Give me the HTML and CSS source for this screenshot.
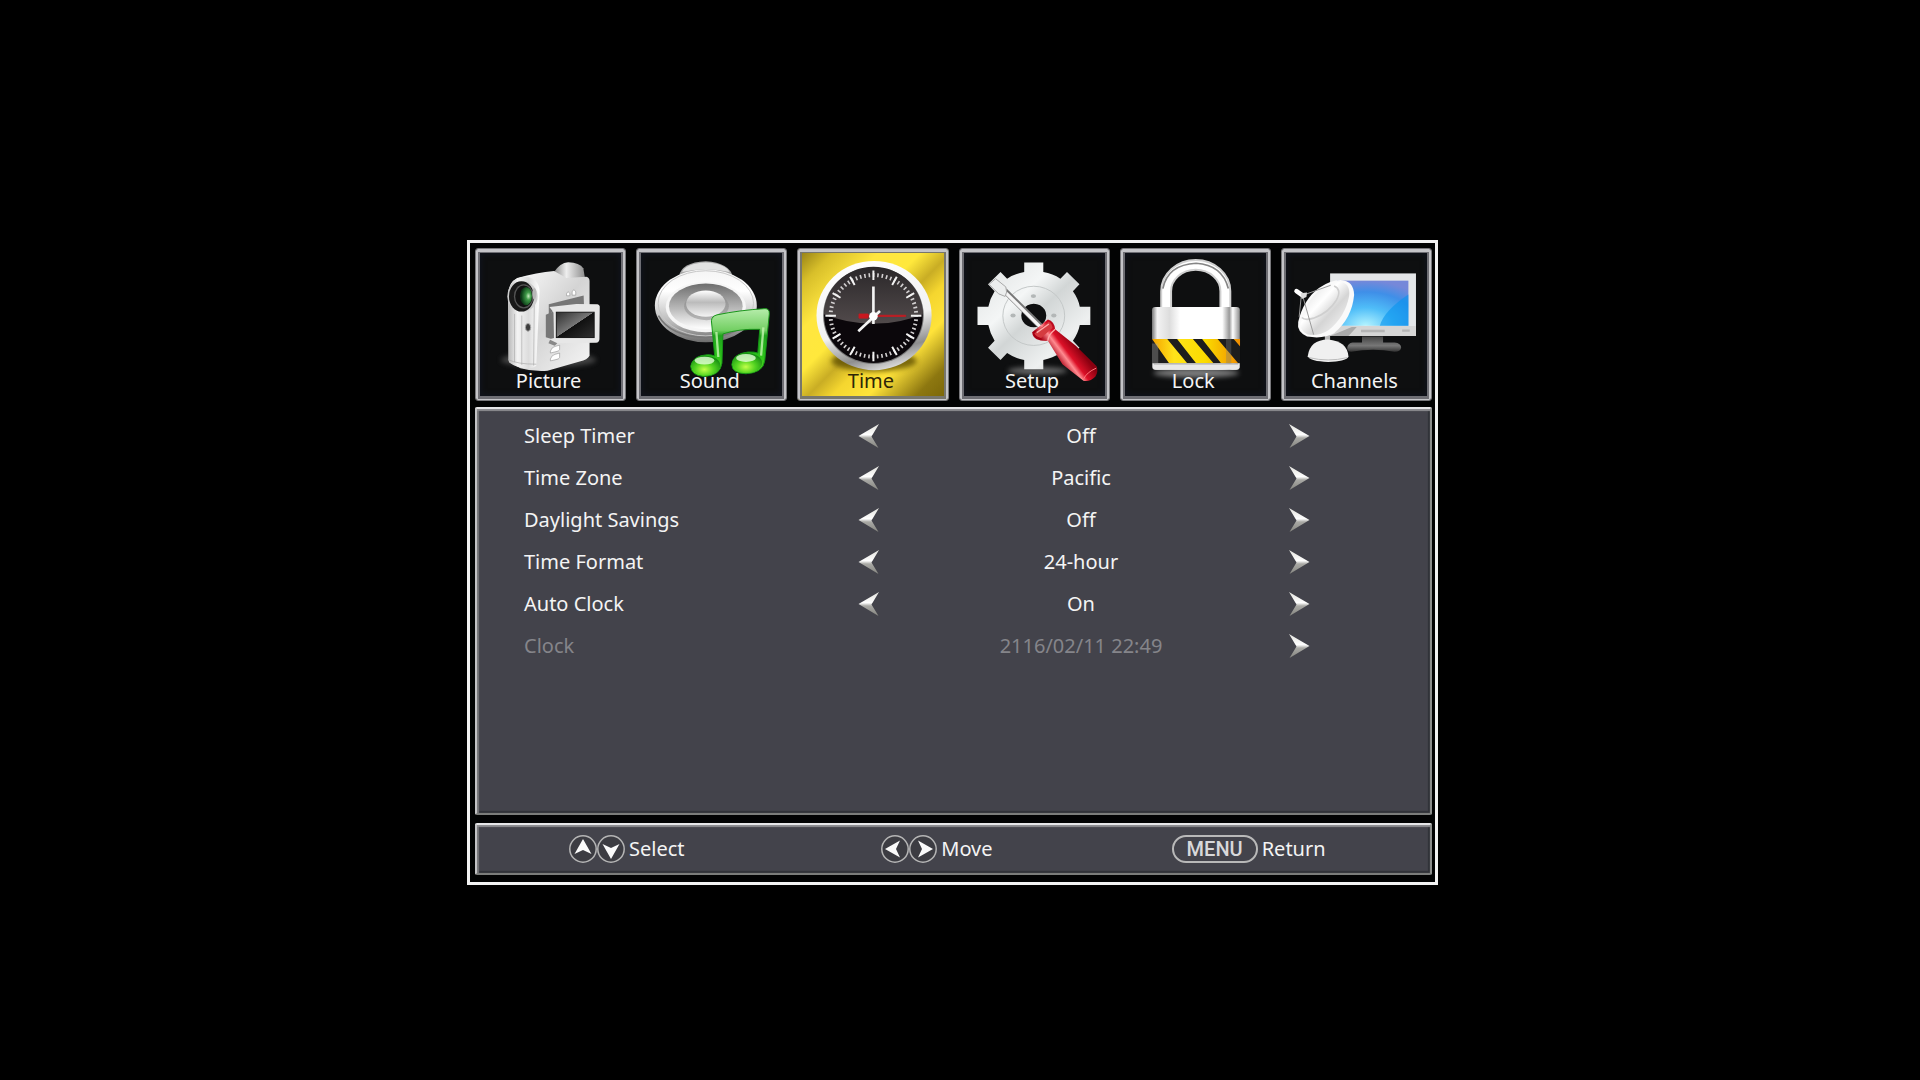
FILE: index.html
```
<!DOCTYPE html>
<html lang="en">
<head>
<meta charset="utf-8">
<meta name="viewport" content="width=device-width, initial-scale=1">
<title>TV Settings - Time</title>
<link rel="stylesheet" href="styles.css">
</head>
<body>
<svg class="defs" aria-hidden="true">
  <defs>
    <linearGradient id="arrowFill" x1="0" y1="0" x2="0" y2="1">
      <stop offset="0.1" stop-color="#e8e8e4"/><stop offset="0.45" stop-color="#fff"/><stop offset="0.58" stop-color="#a9a9a5"/><stop offset="1" stop-color="#85857f"/>
    </linearGradient>
    <symbol id="arrow-right" viewBox="0 0 22 24"><path d="M1 0 L21.500 12 L1.500 24 L8.500 12.500 Z" fill="url(#arrowFill)"/></symbol>
    <symbol id="arrow-left" viewBox="0 0 22 24"><path d="M21 0 L0.500 12 L20.500 24 L13.500 12.500 Z" fill="url(#arrowFill)"/></symbol>
    <symbol id="key" viewBox="0 0 28 28"><circle cx="14" cy="14" r="13.200" fill="#3c3c42" stroke="#b5b5b5" stroke-width="1.500"/><path d="M14 4 L22.500 19 L14 15 L5.500 19 Z" fill="#fafafa"/></symbol>
    <filter id="soft" x="-30%" y="-80%" width="160%" height="260%"><feGaussianBlur stdDeviation="8"/></filter>
  </defs>
</svg>
<main class="osd">
  <nav class="tabs" aria-label="Menu">
    <button class="tab" type="button">
      <svg class="tab-icon" viewBox="60 53 423 429" aria-hidden="true">
        <defs>
          <linearGradient id="camSide" x1="0" y1="0" x2="1" y2="1"><stop offset="0" stop-color="#fff"/><stop offset=".5" stop-color="#d4d4d4"/><stop offset="1" stop-color="#f6f6f6"/></linearGradient>
          <linearGradient id="camFront" x1="0" y1="0" x2="1" y2="0"><stop offset="0" stop-color="#b8b8b8"/><stop offset=".3" stop-color="#f4f4f4"/><stop offset=".65" stop-color="#dcdcdc"/><stop offset="1" stop-color="#fff"/></linearGradient>
          <linearGradient id="camTop" x1="0" y1="0" x2="1" y2="0"><stop offset="0" stop-color="#8a8a8a"/><stop offset=".4" stop-color="#eee"/><stop offset="1" stop-color="#8d8d8d"/></linearGradient>
          <linearGradient id="camLcd" x1="0" y1="0" x2="1" y2="1"><stop offset="0" stop-color="#2e2e2e"/><stop offset=".49" stop-color="#777"/><stop offset=".5" stop-color="#101010"/><stop offset="1" stop-color="#303030"/></linearGradient>
          <radialGradient id="camLens" cx=".7" cy=".5" r=".6"><stop offset="0" stop-color="#c8edc0"/><stop offset=".35" stop-color="#3f9a48"/><stop offset="1" stop-color="#0b3b16"/></radialGradient>
        </defs>
        <ellipse cx="265" cy="375" rx="145" ry="22" fill="#666" opacity=".6" filter="url(#soft)"/>
        <path d="M282 108 Q300 80 325 78 Q360 80 371 96 L376 126 L322 132 Z" fill="url(#camTop)"/>
        <path d="M170 126 Q230 110 282 105 L320 126 L380 122 Q390 124 390 135 L390 362 Q384 374 360 380 L262 408 Q225 412 180 400 L145 382 L142 180 Q142 140 170 126Z" fill="url(#camSide)"/>
        <path d="M143 165 Q155 122 195 122 Q235 125 238 165 L228 392 Q222 402 190 400 Q148 392 143 375Z" fill="url(#camFront)"/>
        <path d="M162 235 L162 382 M184 240 L184 390 M222 205 L220 392" stroke="#a9a9a9" stroke-width="2" fill="none"/>
        <path d="M143 374 Q170 388 228 388" stroke="#aaa" stroke-width="2" fill="none"/>
        <circle cx="186" cy="182" r="46" fill="#cfcfcf"/>
        <ellipse cx="183" cy="182" rx="38" ry="46" fill="#191919"/>
        <ellipse cx="190" cy="182" rx="30" ry="37" fill="#555"/>
        <ellipse cx="190" cy="182" rx="26" ry="33" fill="#111"/>
        <ellipse cx="197" cy="181" rx="18" ry="28" fill="url(#camLens)"/>
        <ellipse cx="222" cy="174" rx="6" ry="18" fill="#b8b8b8"/>
        <ellipse cx="203" cy="276" rx="8" ry="12" fill="#3c3c3c" stroke="#aaa" stroke-width="3"/>
        <path d="M266 206 L372 179 L373 208 L290 214 L266 240Z" fill="#777"/>
        <path d="M257 238 L280 228 L282 314 L257 306Z" fill="#777"/>
        <path d="M268 214 L350 205 L414 206 Q422 208 421 216 L420 312 Q419 322 410 323 L282 324 L268 312 L282 308 L282 232Z" fill="#e7e7e7"/>
        <rect x="289" y="230" width="115" height="77" fill="url(#camLcd)" stroke="#171717" stroke-width="3"/>
        <path d="M320 174q5-12 10 0v6h-10zM337 168q5-12 11 0v10h-11z" fill="#fff" stroke="#999" stroke-width="2"/>
        <path d="M271 348q4-12 14-14l14-4v14q-3 5-11 6l-17 4zM271 372q4-12 14-14l14-4v14q-3 5-11 6l-17 4z" fill="#fff" stroke="#999" stroke-width="2"/>
        <path d="M270 314 L265 324 L284 332 L292 324Z" fill="#888"/>
      </svg>
      <span class="tab-label">Picture</span>
    </button>
    <button class="tab" type="button">
      <svg class="tab-icon" viewBox="46 53 423 429" aria-hidden="true">
        <defs>
          <linearGradient id="spkRim" x1="0" y1="0" x2="0" y2="1"><stop offset="0" stop-color="#f4f4f4"/><stop offset=".3" stop-color="#fff"/><stop offset=".75" stop-color="#b5b5b5"/><stop offset="1" stop-color="#6d6d6d"/></linearGradient>
          <linearGradient id="spkCone" x1="0" y1="0" x2="0" y2="1"><stop offset="0" stop-color="#6e6e6e"/><stop offset=".55" stop-color="#b9b9b9"/><stop offset="1" stop-color="#fff"/></linearGradient>
          <linearGradient id="spkCap" x1="0" y1="0" x2="0" y2="1"><stop offset="0" stop-color="#fff"/><stop offset=".45" stop-color="#bbb"/><stop offset="1" stop-color="#f4f4f4"/></linearGradient>
          <linearGradient id="noteBar" x1="0" y1="0" x2="0" y2="1"><stop offset="0" stop-color="#b7edac"/><stop offset=".32" stop-color="#73cf63"/><stop offset=".4" stop-color="#1fa31c"/><stop offset=".7" stop-color="#2cc21a"/><stop offset="1" stop-color="#62dd22"/></linearGradient>
          <radialGradient id="noteHead" cx=".45" cy=".7" r=".65"><stop offset="0" stop-color="#c2ff4a"/><stop offset=".5" stop-color="#52d321"/><stop offset="1" stop-color="#178f13"/></radialGradient>
        </defs>
        <path d="M158 122 Q165 78 240 75 Q312 80 322 122Z" fill="#a9a9a9"/>
        <path d="M168 108 Q178 82 240 79 Q300 82 312 108 Q240 90 168 108Z" fill="#e2e2e2"/>
        <ellipse cx="240" cy="210" rx="155" ry="111" fill="url(#spkRim)"/>
        <ellipse cx="240" cy="203" rx="145" ry="99" fill="none" stroke="#c6c6c6" stroke-width="3"/>
        <path d="M96 240 Q130 302 240 307 Q340 304 382 240" fill="none" stroke="#777" stroke-width="5"/>
        <ellipse cx="240" cy="214" rx="122" ry="77" fill="#f6f6f6"/>
        <ellipse cx="240" cy="212" rx="112" ry="69" fill="url(#spkCone)"/>
        <ellipse cx="242" cy="212" rx="68" ry="42" fill="#8a8a8a" opacity=".5"/>
        <ellipse cx="240" cy="204" rx="60" ry="40" fill="url(#spkCap)"/>
        <path d="M257 256 Q258 242 274 238 Q340 224 420 219 Q434 219 433 235 L419 378 Q414 414 362 417 Q320 416 319 389 Q322 356 368 351 Q388 350 398 354 L404 282 Q340 280 292 296 L289 385 Q284 424 232 425 Q196 422 194 394 Q200 362 245 359 Q258 359 267 363Z" fill="url(#noteBar)" stroke="#159416" stroke-width="3"/>
        <ellipse cx="240" cy="392" rx="44" ry="30" fill="url(#noteHead)"/>
        <ellipse cx="366" cy="384" rx="45" ry="30" fill="url(#noteHead)"/>
        <ellipse cx="236" cy="377" rx="30" ry="12" fill="#e5ffd9" opacity=".8"/>
        <ellipse cx="362" cy="369" rx="30" ry="12" fill="#e5ffd9" opacity=".8"/>
        <path d="M272 290 L278 366 M415 276 L408 362" stroke="#c5f5b0" stroke-width="7" opacity=".8"/>
      </svg>
      <span class="tab-label">Sound</span>
    </button>
    <button class="tab tab-active" type="button" aria-current="page">
      <svg class="tab-icon" viewBox="50 53 423 429" aria-hidden="true">
        <defs>
          <linearGradient id="clkRim" x1=".3" y1="0" x2=".6" y2="1"><stop offset="0" stop-color="#fff"/><stop offset=".6" stop-color="#f1f1f1"/><stop offset=".85" stop-color="#8e8e8e"/><stop offset="1" stop-color="#ddd"/></linearGradient>
          <linearGradient id="clkGloss" x1="0" y1="0" x2="0" y2="1"><stop offset="0" stop-color="#2a2729"/><stop offset="1" stop-color="#514a4b"/></linearGradient>
        </defs>
        <ellipse cx="266" cy="378" rx="130" ry="32" fill="#5d4d00" opacity=".8" filter="url(#soft)"/>
        <ellipse cx="266" cy="240" rx="175" ry="166" fill="url(#clkRim)"/>
        <ellipse cx="264" cy="240" rx="153" ry="147" fill="#777"/>
        <ellipse cx="264" cy="240" rx="150" ry="144" fill="#0b070b"/>
        <path d="M114 236 A150 144 0 0 1 414 236 Q340 266 264 264 Q180 264 114 236Z" fill="url(#clkGloss)"/>
        <ellipse cx="264" cy="241" rx="130" ry="124" fill="none" stroke="#d2cfd0" stroke-width="12" pathLength="360" stroke-dasharray="2.200 3.800" stroke-dashoffset="1.100"/>
        <g stroke="#f2f2f2" stroke-width="6">
          <path d="M264 103V132M264 350V379M118 241H150M378 241H410"/>
          <path d="M193 122L207 147M335 122L321 147M193 360L207 335M335 360L321 335M140 172L164 186M388 172L364 186M140 310L164 296M388 310L364 296"/>
        </g>
        <path d="M220 235H248V239H362V243H248V248H220Z" fill="#c91820" stroke="#c91820" stroke-width="2"/>
        <path d="M264 152V266M218 288L284 226" stroke="#f4f4f4" stroke-width="8"/>
        <circle cx="264" cy="242" r="13" fill="#fff"/>
      </svg>
      <span class="tab-label">Time</span>
    </button>
    <button class="tab" type="button">
      <svg class="tab-icon" viewBox="50 53 423 429" aria-hidden="true">
        <defs>
          <linearGradient id="gearFill" x1="0" y1="0" x2="1" y2="1"><stop offset="0" stop-color="#dde0e0"/><stop offset=".35" stop-color="#f4f6f6"/><stop offset=".5" stop-color="#d2d6d6"/><stop offset=".75" stop-color="#eef0f0"/><stop offset="1" stop-color="#bfc4c4"/></linearGradient>
          <linearGradient id="gripFill" gradientUnits="userSpaceOnUse" x1="325" y1="370" x2="385" y2="325"><stop offset="0" stop-color="#a90014"/><stop offset=".35" stop-color="#ff8b90"/><stop offset=".55" stop-color="#dc1027"/><stop offset="1" stop-color="#8b0010"/></linearGradient>
        </defs>
        <ellipse cx="270" cy="408" rx="90" ry="12" fill="#888" opacity=".7" filter="url(#soft)"/>
        <path fill-rule="evenodd" fill="url(#gearFill)" d="M230 79H288V108Q317 113 340 128L360 108L398 145L378 166Q394 188 399 213H431V269H399Q394 294 378 317L398 338L360 375L340 354Q317 370 288 375V403H230V375Q201 370 178 354L158 375L120 338L140 317Q126 294 121 269H88V213H121Q126 188 140 166L120 145L158 108L178 128Q201 113 230 108ZM259 204a38 36 0 1 0 .1 0Z"/>
        <ellipse cx="259" cy="241" rx="94" ry="90" fill="none" stroke="#c3c7c7" stroke-width="3"/>
        <g fill="#b3b7b7"><ellipse cx="258" cy="181" rx="8" ry="6"/><ellipse cx="196" cy="240" rx="8" ry="6"/><ellipse cx="320" cy="240" rx="8" ry="6"/></g>
        <path d="M170 164L282 275" stroke="#777" stroke-width="18"/>
        <path d="M168 165L280 276" stroke="#f5f5f5" stroke-width="10"/>
        <path d="M123 145L143 128L174 153Q180 170 172 182L152 174Z" fill="#eceeee" stroke="#a7a7a7" stroke-width="3"/>
        <path d="M254 291L302 252Q322 258 324 282L386 331L450 394Q456 410 446 426Q430 442 410 438L346 388L302 317Q280 318 268 312Q256 306 254 291Z" fill="url(#gripFill)"/>
        <path d="M261 295L304 259Q315 264 316 278L281 308Q268 306 261 295Z" fill="#d53b40"/>
        <path d="M268 292L305 266M302 317Q302 300 324 282" stroke="#ffaaa9" stroke-width="4" fill="none"/>
        <path d="M410 434Q420 412 449 400" stroke="#ff777b" stroke-width="3" fill="none"/>
      </svg>
      <span class="tab-label">Setup</span>
    </button>
    <button class="tab" type="button">
      <svg class="tab-icon" viewBox="57 53 423 429" aria-hidden="true">
        <defs>
          <linearGradient id="lockBody" x1="0" y1="0" x2="1" y2="0"><stop offset="0" stop-color="#777"/><stop offset=".06" stop-color="#f3f3f3"/><stop offset=".2" stop-color="#ddd"/><stop offset=".32" stop-color="#fff"/><stop offset=".8" stop-color="#fff"/><stop offset=".88" stop-color="#999"/><stop offset=".92" stop-color="#fff"/><stop offset="1" stop-color="#8b8b8b"/></linearGradient>
          <linearGradient id="lockStripe" x1="0" y1="0" x2="1" y2="0"><stop offset="0" stop-color="#f5a400"/><stop offset=".25" stop-color="#ffe31a"/><stop offset=".6" stop-color="#fbdc00"/><stop offset="1" stop-color="#f08d00"/></linearGradient>
          <clipPath id="lockBand"><rect x="136" y="311" width="268" height="74"/></clipPath>
        </defs>
        <ellipse cx="270" cy="415" rx="130" ry="14" fill="#aaa" opacity=".7" filter="url(#soft)"/>
        <path d="M179 222V166A90 80 0 0 1 359 166V222" fill="none" stroke="#d0d0d0" stroke-width="36"/>
        <path d="M179 222V166A90 80 0 0 1 359 166V222" fill="none" stroke="#fff" stroke-width="24"/>
        <path d="M169 158Q184 85 270 81Q350 86 368 158" fill="none" stroke="#858585" stroke-width="5"/>
        <rect x="136" y="214" width="267" height="191" rx="10" fill="url(#lockBody)"/>
        <g clip-path="url(#lockBand)">
          <rect x="136" y="311" width="268" height="74" fill="#1d1d1d"/>
          <path fill="url(#lockStripe)" d="M136 311H182L243 385H188ZM212 311H260L323 385H270ZM288 311H335L398 385H346ZM384 311H404V334Z"/>
          <path d="M136 325H155V385H136Z" fill="#aaa" opacity=".35"/>
          <path d="M361 311H377V385H361Z" fill="#777" opacity=".35"/>
        </g>
        <path d="M138 386H402V398Q400 405 392 405H148Q138 405 138 396Z" fill="#e8e8e8"/>
        <path d="M142 387H398" stroke="#999" stroke-width="3"/>
      </svg>
      <span class="tab-label">Lock</span>
    </button>
    <button class="tab" type="button">
      <svg class="tab-icon" viewBox="63 53 423 429" aria-hidden="true">
        <defs>
          <radialGradient id="tvScreen" cx=".4" cy="1" r="1"><stop offset="0" stop-color="#b4f4ff"/><stop offset=".4" stop-color="#4fbdf8"/><stop offset=".75" stop-color="#3f8fe8"/><stop offset="1" stop-color="#7688d9"/></radialGradient>
          <linearGradient id="dishFill" x1="0" y1="0" x2="1" y2="1"><stop offset="0" stop-color="#d4d4d4"/><stop offset=".4" stop-color="#fff"/><stop offset=".6" stop-color="#d5d5d5"/><stop offset="1" stop-color="#fff"/></linearGradient>
          <linearGradient id="standFill" x1="0" y1="0" x2="0" y2="1"><stop offset="0" stop-color="#444"/><stop offset=".6" stop-color="#777"/><stop offset="1" stop-color="#333"/></linearGradient>
        </defs>
        <path d="M291 304H355V322H390Q410 324 410 338Q408 350 390 350Q325 338 258 350Q246 350 246 338Q248 324 262 322H291Z" fill="url(#standFill)"/>
        <rect x="194" y="112" width="261" height="190" fill="#e4e6e8"/>
        <path d="M194 302V272H455V302Z" fill="#d5d5d5"/>
        <path d="M194 302L260 275H275L250 302Z" fill="#aaa"/>
        <rect x="215" y="134" width="217" height="137" fill="url(#tvScreen)"/>
        <path d="M432 176V271H345Q358 225 432 176Z" fill="#0795ef" opacity=".6"/>
        <path d="M288 287H360M413 286H436" stroke="#b5b5b5" stroke-width="7"/>
        <path d="M178 294H194V322H178Z" fill="#b9b9b9"/>
        <path d="M126 364Q132 314 188 313Q246 318 250 365Q240 380 188 381Q134 380 126 364Z" fill="#f0f0f0"/>
        <path d="M130 368Q188 382 246 368" stroke="#bbb" stroke-width="3" fill="none"/>
        <path d="M226 132Q266 134 267 178Q260 250 206 294Q174 312 124 304Q92 290 97 260Q112 192 160 156Q196 132 226 132Z" fill="#fafafa"/>
        <path d="M222 138Q256 140 252 180Q240 244 190 284Q160 304 126 298Q100 286 104 258Q120 196 164 160Q196 138 222 138Z" fill="url(#dishFill)"/>
        <path d="M206 150Q230 160 214 192Q190 232 144 248Q118 256 108 246" fill="none" stroke="#cfcfcf" stroke-width="5"/>
        <path d="M110 178L144 298M118 176L196 148M106 184L100 244" stroke="#999" stroke-width="3" fill="none"/>
        <path d="M92 166L108 177" stroke="#fff" stroke-width="14" stroke-linecap="round"/>
        <path d="M104 172L124 170L122 184L108 190Z" fill="#ddd"/>
      </svg>
      <span class="tab-label">Channels</span>
    </button>
  </nav>

  <section class="panel settings" aria-label="Time">
    <div class="row">
      <label class="name" for="sleep">Sleep Timer</label>
      <button class="step" type="button" aria-label="Previous sleep timer"><svg class="arrow"><use href="#arrow-left"/></svg></button>
      <output class="value" id="sleep">Off</output>
      <button class="step next" type="button" aria-label="Next sleep timer"><svg class="arrow"><use href="#arrow-right"/></svg></button>
    </div>
    <div class="row">
      <label class="name" for="zone">Time Zone</label>
      <button class="step" type="button" aria-label="Previous time zone"><svg class="arrow"><use href="#arrow-left"/></svg></button>
      <output class="value" id="zone">Pacific</output>
      <button class="step next" type="button" aria-label="Next time zone"><svg class="arrow"><use href="#arrow-right"/></svg></button>
    </div>
    <div class="row">
      <label class="name" for="dst">Daylight Savings</label>
      <button class="step" type="button" aria-label="Previous daylight savings"><svg class="arrow"><use href="#arrow-left"/></svg></button>
      <output class="value" id="dst">Off</output>
      <button class="step next" type="button" aria-label="Next daylight savings"><svg class="arrow"><use href="#arrow-right"/></svg></button>
    </div>
    <div class="row">
      <label class="name" for="format">Time Format</label>
      <button class="step" type="button" aria-label="Previous time format"><svg class="arrow"><use href="#arrow-left"/></svg></button>
      <output class="value" id="format">24-hour</output>
      <button class="step next" type="button" aria-label="Next time format"><svg class="arrow"><use href="#arrow-right"/></svg></button>
    </div>
    <div class="row">
      <label class="name" for="auto">Auto Clock</label>
      <button class="step" type="button" aria-label="Previous auto clock"><svg class="arrow"><use href="#arrow-left"/></svg></button>
      <output class="value" id="auto">On</output>
      <button class="step next" type="button" aria-label="Next auto clock"><svg class="arrow"><use href="#arrow-right"/></svg></button>
    </div>
    <div class="row row-disabled">
      <label class="name" for="clock">Clock</label>
      <span></span>
      <output class="value" id="clock">2116/02/11 22:49</output>
      <button class="step next" type="button" aria-label="Set clock"><svg class="arrow"><use href="#arrow-right"/></svg></button>
    </div>
  </section>

  <footer class="panel hints">
    <div class="hint">
      <svg class="key"><use href="#key"/></svg><svg class="key key-down"><use href="#key"/></svg>
      <span class="hint-text">Select</span>
    </div>
    <div class="hint">
      <svg class="key key-left"><use href="#key"/></svg><svg class="key key-right"><use href="#key"/></svg>
      <span class="hint-text">Move</span>
    </div>
    <div class="hint">
      <kbd class="menu-key">MENU</kbd>
      <span class="hint-text">Return</span>
    </div>
  </footer>
</main>
</body>
</html>
```
FILE: styles.css
```
* {
  box-sizing: border-box;
}

body {
  display: flex;
  align-items: center;
  justify-content: center;
  min-height: 100vh;
  margin: 0;
  padding: 45px 15px 0 0;
  background: #000;
  color: #f4f4f4;
  font: 20px/28px "Noto Sans", "Open Sans", sans-serif;
}

button {
  margin: 0;
  padding: 0;
  border: 0;
  background: none;
  color: inherit;
  font: inherit;
}

.defs {
  position: absolute;
  width: 0;
  height: 0;
}

.osd {
  display: flex;
  flex-direction: column;
  width: 100%;
  max-width: 971px;
  padding: 5px 3px 7px 5px;
  border: 3px solid #f2f2f2;
  background: #020303;
}

/* Category tabs */
.tabs {
  display: grid;
  grid-template-columns: repeat(6, 1fr);
  gap: 10px;
  margin-bottom: 6px;
}

.tab {
  position: relative;
  padding: 5px;
  border: 1px solid #77777a;
  border-radius: 3px;
  background: #0e0f10;
  box-shadow: inset 0 1px 0 2px #c4c4c8, inset 0 0 0 4px #6e6e74, inset 0 0 5px 6px #10131c;
}

.tab-active {
  background: linear-gradient(135deg, #8a7612 0%, #d8bf2a 13%, #ffe640 28%, #ffe83c 42%, #c9ad24 52%, #f5d62f 60%, #ffe33a 72%, #8d7710 88%, #776407 100%);
  box-shadow: inset 0 1px 0 2px #c4c4c8, inset 0 0 0 4px #77766c;
  color: #2e2608;
}

.tab-icon {
  display: block;
  width: 100%;
  height: auto;
}

.tab-label {
  position: absolute;
  inset: auto 0 5px;
  padding-right: 4px;
}

/* Bevelled surfaces */
.panel {
  border: 2px solid;
  border-color: #e6e6e8 #8c8e8c #7b7d7b #c2c2c4;
  border-radius: 2px;
  background: #43434b;
  box-shadow: inset 0 2px 1px #8e8e92, inset 2px 0 1px #77777b, inset -2px -2px 1px #303238;
}

.settings {
  min-height: 408px;
  margin-bottom: 8px;
  padding: 6px 120px 6px 47px;
}

.row {
  display: grid;
  grid-template-columns: 334fr 22px 402fr 28px;
  align-items: center;
  height: 42px;
}

.row-disabled {
  color: #85858a;
}

.value {
  text-align: center;
}

.step {
  display: flex;
  justify-content: flex-end;
}

.arrow {
  width: 22px;
  height: 24px;
}

/* Remote control hints */
.hints {
  display: grid;
  grid-template-columns: 313fr 291fr 259fr;
  align-items: center;
  min-height: 52px;
  padding-left: 92px;
}

.hint {
  display: flex;
  align-items: center;
}

.key {
  width: 28px;
  height: 28px;
}

.key-down {
  transform: rotate(180deg);
}

.key-left {
  transform: rotate(-90deg);
}

.key-right {
  transform: rotate(90deg);
}

.hint-text {
  padding-left: 4px;
}

.menu-key {
  padding: 0 13px;
  border: 2px solid #b9b9b9;
  border-radius: 14px;
  color: #d8d8da;
  font: 500 20px/24px Roboto, "Noto Sans", sans-serif;
}
```
